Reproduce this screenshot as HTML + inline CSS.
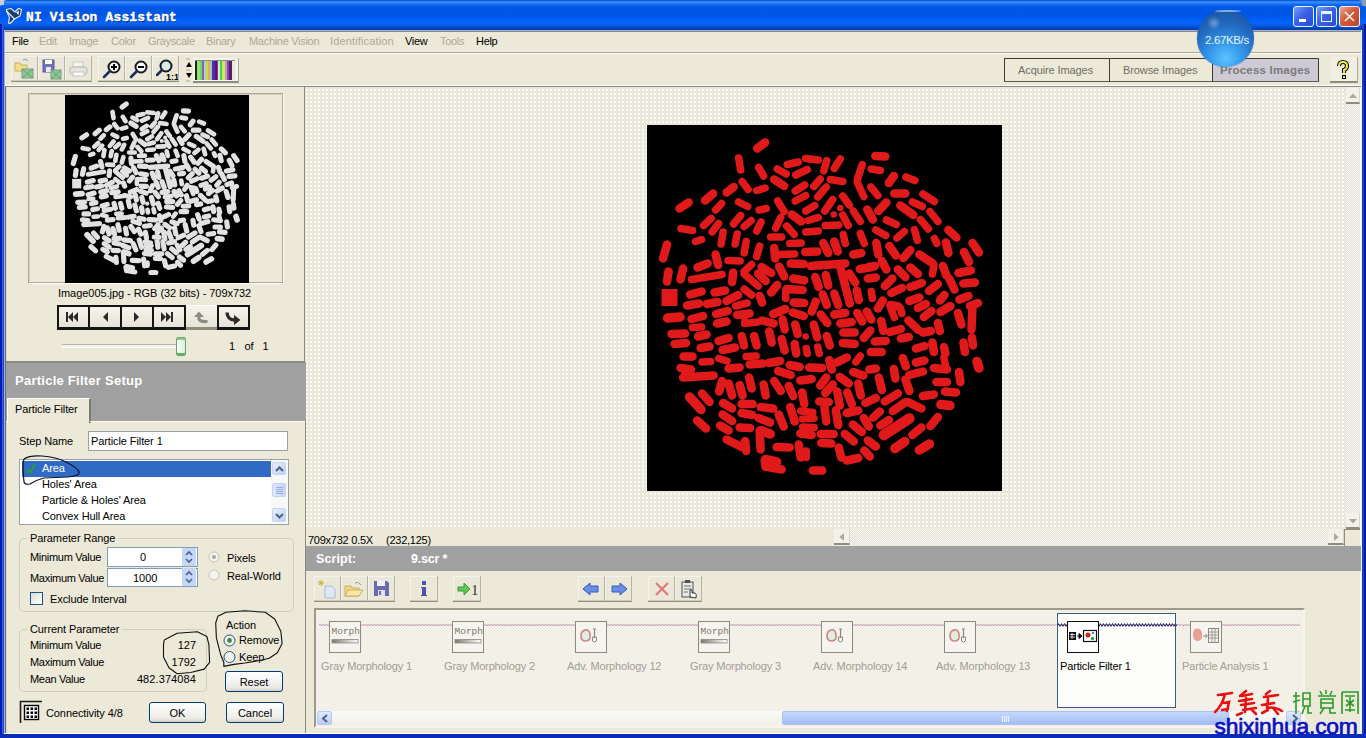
<!DOCTYPE html>
<html><head><meta charset="utf-8">
<style>
*{margin:0;padding:0;box-sizing:border-box}
html,body{width:1366px;height:738px;overflow:hidden;background:#ece9d8;font-family:"Liberation Sans",sans-serif;font-size:11px;color:#000;position:relative}
div,span,svg{position:absolute}
.t{white-space:nowrap;line-height:13px}
#title{left:0;top:0;width:1366px;height:30px;background:linear-gradient(#0048c8 0px,#3d95ff 2px,#1a70f0 4px,#0058e6 7px,#0055e4 15px,#005cf8 19px,#0062ff 21px,#0a62f0 24px,#0050d8 27px,#0040b0 29px,#0040b0 30px);border-radius:7px 7px 0 0}
.wb{background:#0b3fd6}
.m{top:35px;color:#aca899;letter-spacing:-0.3px}
.m.on{color:#000}
.tb{height:26px;border-right:1px solid #b8b5a6;border-bottom:1px solid #8f8c7c;box-shadow:inset 0 -1px 0 #cfccbf,inset 1px 1px 0 #f4f3ec;background:#ebe8da}
.tbi{height:26px;border-right:1px solid #aca899;border-bottom:2px solid #8f8c7c}
.hdr{background:#a0a0a0;color:#fff;font-weight:bold;font-size:13px}
.nb{top:305px;width:33px;height:25px;border:2px solid #141414;border-top-width:2px;background:linear-gradient(#f4f2e8,#e6e3d3)}
.btn{border:1px solid #003c74;border-radius:3px;background:linear-gradient(#fff,#ecebe6 80%,#d6d0c5);text-align:center;line-height:20px}
.gb{border:1px solid #d0d0bf;border-radius:5px}
.lbl{background:#ece9d8;padding:0 3px}
.sl{color:#9d9a8c}
#dots{left:306px;top:87px;width:1040px;height:441px;background:linear-gradient(90deg,transparent 2px,#eae8dc 2px),linear-gradient(transparent 2px,#eae8dc 2px),#fcfcf0;background-size:4px 4px;background-position:0px 2px}
.sb{background:conic-gradient(#fcfcf6 25%,#dedcd2 0 50%,#fcfcf6 0 75%,#dedcd2 0) 0 0/2px 2px}
</style></head><body>
<!-- TITLE -->
<div id="title"></div>
<svg style="left:0;top:0" width="26" height="28"><path d="M6.5 9.5 L11 8.5 L15 12 L18.5 8.5 L21.5 9.5 L20 16 L14.5 19 L10 23.5 L8.5 23 L9.5 17.5 L6.5 11 Z" fill="#1e3a6e" stroke="#e8f4ff" stroke-width="1.1"/><path d="M6.5 11 L14.5 19" stroke="#e8f4ff" stroke-width="1.1"/><path d="M16 12.5 L19 10.5 L18.5 15" fill="#e8f4ff"/></svg>
<div class="t" style="left:26px;top:11px;font-family:'Liberation Mono',monospace;font-weight:bold;font-size:13px;color:#fff;letter-spacing:0.15px;-webkit-text-stroke:0.4px #fff;text-shadow:1px 1px 0 #0a2a80">NI Vision Assistant</div>
<div style="left:0;top:24px;width:2px;height:714px;background:#001cb8"></div>
<div style="left:2px;top:24px;width:1px;height:714px;background:#3060f0"></div>
<div style="left:3px;top:24px;width:1px;height:714px;background:#2848c8"></div>
<div style="left:4px;top:30px;width:1px;height:704px;background:#a0b0d8"></div>
<div style="left:1362px;top:24px;width:1px;height:714px;background:#1a3ab0"></div>
<div style="left:1363px;top:24px;width:1px;height:714px;background:#2040c0"></div>
<div style="left:1364px;top:24px;width:2px;height:714px;background:#001c98"></div>
<div style="left:1361px;top:30px;width:1px;height:704px;background:#e8f8ff"></div>
<div style="left:0;top:734px;width:1366px;height:4px;background:#0a2cb8"></div>
<div style="left:4px;top:733px;width:1358px;height:1px;background:#fff"></div>
<!-- window buttons -->
<div style="left:1293px;top:6px;width:21px;height:21px;border:1px solid #e8f4ff;border-radius:3px;background:linear-gradient(135deg,#7a9cff,#3a62e8 45%,#2a4cd0)"><div style="left:5px;top:12px;width:7px;height:3px;background:#fff"></div></div>
<div style="left:1316px;top:6px;width:21px;height:21px;border:1px solid #e8f4ff;border-radius:3px;background:linear-gradient(135deg,#7a9cff,#3a62e8 45%,#2a4cd0)"><div style="left:4px;top:4px;width:11px;height:11px;border:1px solid #e8f8ff;border-top-width:3px"></div></div>
<div style="left:1339px;top:6px;width:21px;height:21px;border:1px solid #f4f0f0;border-radius:3px;background:linear-gradient(135deg,#f0a890,#d25a38 45%,#c04428)"><svg style="left:3px;top:3px" width="13" height="13"><path d="M2 2 L11 11 M11 2 L2 11" stroke="#fff4ee" stroke-width="1.7"/></svg></div>
<div style="left:1362px;top:0;width:4px;height:6px;background:#9098b0"></div>
<div style="left:0;top:0;width:4px;height:5px;background:#c8ccd8"></div>
<!-- MENU -->
<div style="left:5px;top:30px;width:1356px;height:1px;background:#a8b0d8"></div>
<div style="left:5px;top:31px;width:1356px;height:1px;background:#8a8a80"></div>
<div style="left:5px;top:52px;width:1356px;height:1px;background:#aca899"></div>
<div style="left:5px;top:53px;width:1356px;height:1px;background:#fff"></div>
<div class="t m on" style="left:12px">File</div>
<div class="t m" style="left:39px">Edit</div>
<div class="t m" style="left:69px">Image</div>
<div class="t m" style="left:111px">Color</div>
<div class="t m" style="left:148px">Grayscale</div>
<div class="t m" style="left:206px">Binary</div>
<div class="t m" style="left:249px">Machine Vision</div>
<div class="t m" style="left:330px;letter-spacing:0.15px">Identification</div>
<div class="t m on" style="left:405px">View</div>
<div class="t m" style="left:440px">Tools</div>
<div class="t m on" style="left:476px">Help</div>
<!-- TOOLBAR -->
<div style="left:5px;top:86px;width:1356px;height:1px;background:#8a8a80"></div>
<div style="left:5px;top:85px;width:1356px;height:1px;background:#fff"></div>
<div class="tb" style="left:11px;top:56px;width:27px"><svg style="left:3px;top:2px" width="22" height="22"><path d="M1 5 L6 5 L7 7 L13 7 L13 13 L1 13 Z" fill="#f3dc8a" stroke="#c9b060"/><path d="M9 2 Q12 0 14 3" fill="none" stroke="#7f9fb0" stroke-width="1"/><rect x="8" y="11" width="11" height="9" fill="#8fc79a" stroke="#7a9a80"/><path d="M8 11 L19 20 M19 11 L8 20" stroke="#5fa070" stroke-width="1"/></svg></div>
<div class="tb" style="left:38px;top:56px;width:27px"><svg style="left:3px;top:2px" width="22" height="22"><rect x="2" y="2" width="11" height="12" fill="#7470b8" stroke="#5a5a98"/><rect x="4" y="2" width="7" height="4" fill="#fff"/><rect x="5" y="9" width="5" height="5" fill="#e8e8f8"/><rect x="10" y="12" width="10" height="9" fill="#8fc79a" stroke="#7a9a80"/><path d="M10 12 L20 21 M20 12 L10 21" stroke="#5fa070"/></svg></div>
<div class="tb" style="left:65px;top:56px;width:27px"><svg style="left:3px;top:4px" width="22" height="20"><rect x="5" y="2" width="10" height="5" fill="#f4f4f0" stroke="#c8c8c0"/><rect x="2" y="7" width="17" height="7" rx="2" fill="#e4e4de" stroke="#b8b8b0"/><rect x="5" y="12" width="11" height="4" fill="#fafaf8" stroke="#c8c8c0"/></svg></div>
<div class="tb" style="left:98px;top:56px;width:27px"><svg style="left:4px;top:3px" width="20" height="20"><circle cx="12" cy="8" r="5.5" fill="#fff" stroke="#1a1a1a" stroke-width="2"/><path d="M9 8 H15 M12 5 V11" stroke="#000" stroke-width="2"/><path d="M8 12 L2 18" stroke="#1e2a5e" stroke-width="2.5" stroke-linecap="round"/></svg></div>
<div class="tb" style="left:125px;top:56px;width:27px"><svg style="left:4px;top:3px" width="20" height="20"><circle cx="12" cy="8" r="5.5" fill="#fff" stroke="#1a1a1a" stroke-width="2"/><path d="M9 8 H15" stroke="#000" stroke-width="2"/><path d="M8 12 L2 18" stroke="#1e2a5e" stroke-width="2.5" stroke-linecap="round"/></svg></div>
<div class="tb" style="left:152px;top:56px;width:27px"><svg style="left:4px;top:3px" width="22" height="22"><circle cx="10" cy="7" r="5.5" fill="#d8ecec" stroke="#1a1a1a" stroke-width="2"/><path d="M6 11 L1 16" stroke="#1e2a5e" stroke-width="2.5" stroke-linecap="round"/><text x="10" y="21" font-family="Liberation Sans" font-weight="bold" font-size="9" fill="#000">1:1</text></svg></div>
<svg style="left:185px;top:58px" width="10" height="24"><path d="M1 1 H5 M1 12 H5 M1 23 H5" stroke="#aca899"/><path d="M4 4 L1 9 H7 Z" fill="#000"/><path d="M1 15 H7 L4 20 Z" fill="#000"/></svg>
<div style="left:193px;top:58px;width:46px;height:25px;border-right:1px solid #aca899;border-bottom:2px solid #8f8c7c;background:#f4f3ea"></div>
<svg style="left:195px;top:60px" width="40" height="20"><g>
<rect x="0" y="0" width="40" height="20" fill="#888"/>
<rect x="0" y="1" width="2" height="19" fill="#222"/><rect x="2" y="1" width="3" height="19" fill="#8ce86a"/><rect x="5" y="1" width="2" height="19" fill="#6fd870"/><rect x="7" y="1" width="2" height="19" fill="#9a60a8"/><rect x="9" y="1" width="2" height="19" fill="#b0c8e0"/><rect x="11" y="1" width="2" height="19" fill="#c8e040"/><rect x="13" y="1" width="2" height="19" fill="#e0b060"/><rect x="15" y="1" width="2" height="19" fill="#a0c0e0"/><rect x="17" y="1" width="3" height="19" fill="#5030a0"/><rect x="20" y="1" width="2" height="19" fill="#401890"/><rect x="22" y="1" width="1" height="19" fill="#d02040"/><rect x="23" y="1" width="2" height="19" fill="#c0f0e0"/><rect x="25" y="1" width="2" height="19" fill="#50c860"/><rect x="27" y="1" width="3" height="19" fill="#c8f040"/><rect x="30" y="1" width="2" height="19" fill="#c890d8"/><rect x="32" y="1" width="2" height="19" fill="#9040b0"/><rect x="34" y="1" width="3" height="19" fill="#502060"/><rect x="37" y="1" width="3" height="19" fill="#e8e8e0"/>
</g></svg>
<!-- right tabs -->
<div style="left:1004px;top:58px;width:315px;height:24px;border:1px solid #3c3c34;border-bottom-color:#5a5a50;background:#ece9d8"></div>
<div style="left:1109px;top:58px;width:1px;height:24px;background:#3c3c34"></div>
<div style="left:1212px;top:58px;width:1px;height:24px;background:#3c3c34"></div>
<div style="left:1213px;top:59px;width:105px;height:22px;background:#cdcad6"></div>
<div class="t" style="left:1018px;top:64px;color:#6f6e66;letter-spacing:-0.1px">Acquire Images</div>
<div class="t" style="left:1123px;top:64px;color:#6f6e66;letter-spacing:-0.1px">Browse Images</div>
<div class="t" style="left:1220px;top:64px;color:#7a7a7a;font-weight:bold;font-size:11.5px;letter-spacing:0.2px">Process Images</div>
<div style="left:1330px;top:57px;width:28px;height:26px;border-right:1px solid #aca899;border-bottom:2px solid #8f8c7c;background:#f1efe4"><svg style="left:6px;top:3px" width="14" height="19"><path d="M3 6 Q3 2 7 2 Q11 2 11 6 Q11 9 8 10 L8 13" fill="none" stroke="#000" stroke-width="4"/><path d="M3 6 Q3 2 7 2 Q11 2 11 6 Q11 9 8 10 L8 13" fill="none" stroke="#f0f040" stroke-width="2"/><rect x="6" y="15" width="4" height="4" fill="#000"/><rect x="7" y="16" width="2" height="2" fill="#f0f040"/></svg></div>
<!-- LEFT PANEL TOP -->
<div style="left:5px;top:87px;width:1px;height:646px;background:#6c6c6c"></div><div style="left:6px;top:87px;width:1px;height:646px;background:#d8d8d0"></div>
<div style="left:304px;top:87px;width:1px;height:275px;background:#8a8a80"></div>
<div style="left:6px;top:361px;width:299px;height:1px;background:#8a8a80"></div>
<div style="left:28px;top:93px;width:256px;height:191px;border:1px solid #aca899;border-right-color:#fff;border-bottom-color:#fff;background:#ece9d8"></div>
<div style="left:29px;top:94px;width:254px;height:189px;border:1px solid #d4d0c8;border-right-color:#aca899;border-bottom-color:#aca899"></div>
<svg style="left:65px;top:95px" width="184" height="188" viewBox="0 0 709 732" preserveAspectRatio="none"><rect width="709" height="732" fill="#000"/><use href="#pt" stroke="#e2e2e2"/></svg>
<div class="t" style="left:58px;top:287px;letter-spacing:-0.05px">Image005.jpg - RGB (32 bits) - 709x732</div>
<!-- nav buttons -->
<div style="left:57px;top:305px;width:193px;height:25px;background:linear-gradient(#f6f5ee,#e4e1d2)"></div>
<div style="left:57px;top:305px;width:129px;height:25px;border:2px solid #141414;border-bottom-width:3px"></div>
<div style="left:88px;top:305px;width:2px;height:25px;background:#141414"></div>
<div style="left:120px;top:305px;width:2px;height:25px;background:#141414"></div>
<div style="left:152px;top:305px;width:2px;height:25px;background:#141414"></div>
<div style="left:186px;top:305px;width:31px;height:25px;border-top:1px solid #fff;border-bottom:3px solid #8f8c7c"></div>
<div style="left:217px;top:305px;width:33px;height:25px;border:2px solid #141414;border-bottom-width:3px"></div>
<svg style="left:57px;top:305px" width="193" height="25">
<g fill="#2a2a2a"><rect x="9" y="7" width="2" height="10"/><path d="M11 12 L16 7 V17 Z M16 12 L21 7 V17 Z"/></g>
<path fill="#2a2a2a" d="M46 12 L51 7 V17 Z"/>
<path fill="#2a2a2a" d="M77 7 L82 12 L77 17 Z"/>
<g fill="#2a2a2a"><path d="M104 7 L109 12 L104 17 Z M109 7 L114 12 L109 17 Z"/><rect x="114" y="7" width="2" height="10"/></g>
<path d="M137 12 L142 6.5 L147 12 Z" fill="#8d8c82"/><path d="M142 11 V13.5 Q142 17 150.5 16.5" fill="none" stroke="#8d8c82" stroke-width="3.2"/>
<path d="M170 7.5 Q170.5 15 177.5 15" fill="none" stroke="#2a2a2a" stroke-width="3.4"/><path d="M177 10 L183.5 15 L177 20 Z" fill="#2a2a2a"/>
</svg>
<!-- slider -->
<div style="left:61px;top:344px;width:118px;height:4px;border-top:1px solid #b8b4a0;border-bottom:1px solid #fff;background:#f4f3ee;border-radius:2px"></div>
<div style="left:176px;top:337px;width:10px;height:19px;border:1px solid #6aa870;border-radius:2px;background:linear-gradient(90deg,#f8fff8,#dcefdc);box-shadow:inset 0 -2px 0 #60b060,inset 0 2px 0 #8cc890"></div>
<div class="t" style="left:229px;top:340px">1</div><div class="t" style="left:244.5px;top:340px">of</div><div class="t" style="left:262.5px;top:340px">1</div>
<!-- PARTICLE FILTER SETUP -->
<div style="left:6px;top:362px;width:300px;height:59px;background:#a0a0a0"></div><div style="left:6px;top:362px;width:300px;height:1px;background:#8c8c8c"></div>
<div class="t" style="left:15px;top:374px;color:#fff;font-weight:bold;font-size:13px;letter-spacing:0.25px">Particle Filter Setup</div>
<div style="left:7px;top:398px;width:84px;height:25px;background:#ece9d8;border-top:1px solid #fff;border-left:1px solid #fff;border-right:2px solid #7c7a70"></div>
<div class="t" style="left:15px;top:403px;letter-spacing:-0.1px">Particle Filter</div>
<div style="left:90px;top:421px;width:215px;height:1px;background:#fcfcf4"></div>
<div style="left:305px;top:421px;width:1px;height:312px;background:#8a8a80"></div>
<div class="t" style="left:19px;top:435px;letter-spacing:-0.1px">Step Name</div>
<div style="left:88px;top:431px;width:200px;height:20px;border:1px solid #9aa2a8;background:#fff"></div>
<div class="t" style="left:91px;top:435px;letter-spacing:-0.1px">Particle Filter 1</div>
<!-- listbox -->
<div style="left:19px;top:459px;width:270px;height:66px;border:1px solid #9aa2a8;background:#fff"></div>
<div style="left:22px;top:461px;width:249px;height:16px;background:#316ac5"></div>
<svg style="left:25px;top:462px" width="12" height="13"><path d="M2 7 L5 11 L10 2" fill="none" stroke="#2e9a3a" stroke-width="2.2"/></svg>
<div class="t" style="left:42px;top:462px;color:#fff;letter-spacing:-0.1px">Area</div>
<div class="t" style="left:42px;top:478px;letter-spacing:-0.1px">Holes' Area</div>
<div class="t" style="left:42px;top:494px;letter-spacing:-0.1px">Particle &amp; Holes' Area</div>
<div class="t" style="left:42px;top:510px;letter-spacing:-0.1px">Convex Hull Area</div>
<div style="left:271px;top:460px;width:17px;height:64px;background:#f8f8f6"></div>
<div style="left:272px;top:462px;width:14px;height:13px;border:1px solid #c4d4f4;border-radius:2px;background:linear-gradient(135deg,#e8eefc,#c0d0f4)"><svg style="left:2px;top:3px" width="9" height="6"><path d="M1 5 L4.5 1.5 L8 5" fill="none" stroke="#4d6185" stroke-width="2"/></svg></div>
<div style="left:272px;top:483px;width:14px;height:14px;border:1px solid #c4d4f4;border-radius:2px;background:linear-gradient(90deg,#dce6fc,#c8d6f8)"><svg style="left:2px;top:3px" width="9" height="8"><path d="M1 0.5 H8 M1 2.5 H8 M1 4.5 H8 M1 6.5 H8" stroke="#98acd8" stroke-width="1"/></svg></div>
<div style="left:272px;top:508px;width:14px;height:14px;border:1px solid #c4d4f4;border-radius:2px;background:linear-gradient(135deg,#e8eefc,#c0d0f4)"><svg style="left:2px;top:4px" width="9" height="6"><path d="M1 1 L4.5 4.5 L8 1" fill="none" stroke="#4d6185" stroke-width="2"/></svg></div>
<!-- hand loop around Area -->
<svg style="left:18px;top:452px" width="70" height="36"><path d="M6 7 Q12 3 24 4 Q38 5 48 10 Q60 16 61 20 Q62 24 50 25 L26 26 Q18 28 12 32 Q7 33 6 30 Q5 22 5 14 Q5 9 6 7" fill="none" stroke="#0c1424" stroke-width="1.2"/></svg>
<!-- Parameter Range -->
<div class="gb" style="left:19px;top:538px;width:275px;height:74px"></div>
<div class="t lbl" style="left:27px;top:532px;letter-spacing:-0.1px">Parameter Range</div>
<div class="t" style="left:30px;top:551px;letter-spacing:-0.3px">Minimum Value</div>
<div class="t" style="left:30px;top:572px;letter-spacing:-0.3px">Maximum Value</div>
<div style="left:107px;top:547px;width:91px;height:20px;border:1px solid #7f9db9;background:#fff"></div>
<div style="left:107px;top:568px;width:91px;height:19px;border:1px solid #7f9db9;background:#fff"></div>
<div class="t" style="left:140px;top:551px">0</div>
<div class="t" style="left:133px;top:572px">1000</div>
<svg style="left:182px;top:548px" width="14" height="38"><rect x="0" y="0" width="14" height="18" fill="#c6d6f8"/><rect x="0" y="20" width="14" height="18" fill="#c6d6f8"/><path d="M4 7 L7 4 L10 7 M4 11 L7 14 L10 11 M4 27 L7 24 L10 27 M4 31 L7 34 L10 31" fill="none" stroke="#4d6185" stroke-width="1.6"/></svg>
<svg style="left:208px;top:551px" width="14" height="32"><circle cx="6" cy="6" r="5" fill="#f4f3ee" stroke="#c6c3b4"/><circle cx="6" cy="6" r="2" fill="#a8a698"/><circle cx="6" cy="24" r="5" fill="#f4f3ee" stroke="#c6c3b4"/></svg>
<div class="t" style="left:227px;top:552px;letter-spacing:-0.1px">Pixels</div>
<div class="t" style="left:227px;top:570px;letter-spacing:-0.1px">Real-World</div>
<div style="left:30px;top:592px;width:13px;height:13px;border:1px solid #1c5180;background:linear-gradient(135deg,#dcdcd6,#fff)"></div>
<div class="t" style="left:50px;top:593px;letter-spacing:-0.1px">Exclude Interval</div>
<!-- Current Parameter -->
<div class="gb" style="left:19px;top:629px;width:188px;height:63px"></div>
<div class="t lbl" style="left:27px;top:623px;letter-spacing:-0.1px">Current Parameter</div>
<div class="t" style="left:30px;top:639px;letter-spacing:-0.3px">Minimum Value</div>
<div class="t" style="left:30px;top:656px;letter-spacing:-0.3px">Maximum Value</div>
<div class="t" style="left:30px;top:673px;letter-spacing:-0.3px">Mean Value</div>
<div class="t" style="left:100px;top:639px;width:96px;text-align:right">127</div>
<div class="t" style="left:100px;top:656px;width:96px;text-align:right">1792</div>
<div class="t" style="left:100px;top:673px;width:96px;text-align:right;letter-spacing:0.1px">482.374084</div>
<svg style="left:160px;top:628px" width="54" height="50"><path d="M4.2 12 L17.1 5.2 L37.4 3.8 L46.9 8.6 L48.9 16.7 L49.6 34.3 L44.2 41.1 L30.7 44.5 L17.1 45.8 L9 39.8 L3.5 28.9 L3.5 16.7 L4.2 12" fill="none" stroke="#101010" stroke-width="1.1" stroke-linejoin="round"/></svg>
<!-- Action -->
<div class="t" style="left:226px;top:619px;letter-spacing:-0.1px">Action</div>
<svg style="left:223px;top:634px" width="14" height="32"><circle cx="6.5" cy="6.5" r="5.5" fill="#f4f3ee" stroke="#1c5180"/><circle cx="6.5" cy="6.5" r="2.4" fill="#3c8c3c"/><circle cx="6.5" cy="23" r="5.5" fill="#f4f3ee" stroke="#1c5180"/></svg>
<div class="t" style="left:239px;top:634px;letter-spacing:-0.1px">Remove</div>
<div class="t" style="left:239px;top:651px;letter-spacing:-0.1px">Keep</div>
<svg style="left:212px;top:609px" width="76" height="62"><path d="M5.8 7.3 L13.9 3.2 L32.9 1.8 L53.2 3.2 L62.7 10 L68.8 22.2 L70.1 34.4 L65.4 43.8 L57.2 49.3 L49.1 51.3 L32.9 54 L22 55.4 L11.8 57.4 L11.8 53.3 L8.5 45.2 L4.4 28.9 L3.7 14 L5.8 7.3" fill="none" stroke="#101010" stroke-width="1.1" stroke-linejoin="round"/></svg>
<div class="t btn" style="left:225px;top:671px;width:58px;height:21px">Reset</div>
<!-- bottom row -->
<svg style="left:19px;top:700px" width="26" height="24"><path d="M1.5 23 V1.5 H23" fill="none" stroke="#1a1a1a" stroke-width="1.6"/><rect x="5.5" y="5.5" width="14" height="14" fill="#fff" stroke="#000" stroke-width="1.4"/><g fill="#000"><rect x="7.5" y="7.5" width="2.5" height="2.5"/><rect x="11.5" y="7.5" width="2.5" height="2.5"/><rect x="15.5" y="7.5" width="2.5" height="2.5"/><rect x="7.5" y="11.5" width="2.5" height="2.5"/><rect x="11.5" y="11.5" width="2.5" height="2.5"/><rect x="15.5" y="11.5" width="2.5" height="2.5"/><rect x="7.5" y="15.5" width="2.5" height="2.5"/><rect x="11.5" y="15.5" width="2.5" height="2.5"/><rect x="15.5" y="15.5" width="2.5" height="2.5"/></g></svg>
<div class="t" style="left:46px;top:707px;letter-spacing:-0.1px">Connectivity 4/8</div>
<div class="t btn" style="left:149px;top:702px;width:57px;height:21px">OK</div>
<div class="t btn" style="left:226px;top:702px;width:58px;height:21px">Cancel</div>
<!-- MAIN IMAGE AREA -->
<div id="dots"></div>
<svg style="left:647px;top:125px" width="355" height="366" viewBox="0 0 709 732" preserveAspectRatio="none"><rect width="709" height="732" fill="#000"/><use href="#pp" stroke="#e01a1a"/></svg>
<!-- v scrollbar -->
<div class="sb" style="left:1346px;top:87px;width:15px;height:442px"></div>
<div style="left:1346px;top:88px;width:14px;height:16px;background:#f2f1ea;border-right:1px solid #d8d6c8;border-bottom:2px solid #8f8c7c"><svg style="left:2px;top:4px" width="10" height="7"><path d="M1 6 L5 1.5 L9 6 Z" fill="#aaa898"/></svg></div>
<div style="left:1346px;top:513px;width:14px;height:16px;background:#f2f1ea;border-right:1px solid #d8d6c8;border-bottom:2px solid #8f8c7c"><svg style="left:2px;top:5px" width="10" height="7"><path d="M1 1 L9 1 L5 5.5 Z" fill="#aaa898"/></svg></div>
<!-- h scrollbar -->
<div class="sb" style="left:834px;top:529px;width:510px;height:17px"></div>
<div style="left:834px;top:529px;width:16px;height:16px;background:#f2f1ea;border-right:1px solid #d8d6c8;border-bottom:2px solid #8f8c7c"><svg style="left:4px;top:3px" width="7" height="10"><path d="M6 1 L6 9 L1.5 5 Z" fill="#aaa898"/></svg></div>
<div style="left:1328px;top:529px;width:16px;height:16px;background:#f2f1ea;border-right:1px solid #d8d6c8;border-bottom:2px solid #8f8c7c"><svg style="left:5px;top:3px" width="7" height="10"><path d="M1 1 L1 9 L5.5 5 Z" fill="#aaa898"/></svg></div>
<div style="left:1344px;top:529px;width:17px;height:17px;background:#ece9d8;border-left:1px solid #8f8c7c;border-top:1px solid #8f8c7c"></div>
<div style="left:1360px;top:87px;width:1px;height:647px;background:#f8f8f8"></div>
<div class="t" style="left:308px;top:534px;letter-spacing:-0.25px">709x732 0.5X</div><div class="t" style="left:386px;top:534px;letter-spacing:-0.25px">(232,125)</div>
<!-- SCRIPT -->
<div style="left:306px;top:546px;width:1055px;height:25px;background:#a0a0a0"></div>
<div class="t" style="left:316px;top:553px;color:#fff;font-weight:bold;font-size:12.5px;letter-spacing:0.1px">Script:</div>
<div class="t" style="left:411px;top:553px;color:#fff;font-weight:bold;font-size:12.5px;letter-spacing:-0.2px">9.scr *</div>
<div class="tb" style="left:314px;top:576px;width:27px"><svg style="left:3px;top:2px" width="22" height="22"><path d="M4 2 V8 M1 5 H7 M2 3 L6 7 M6 3 L2 7" stroke="#c8b820" stroke-width="1"/><path d="M8 8 H15 L18 11 V20 H8 Z" fill="#dce8f4" stroke="#a8bcd0"/></svg></div>
<div class="tb" style="left:341px;top:576px;width:27px"><svg style="left:2px;top:3px" width="22" height="22"><path d="M2 7 H8 L9 9 H16 V17 H2 Z" fill="#f0d888" stroke="#c8b060"/><path d="M5 11 H20 L16 17 H2 Z" fill="#f8e8a8" stroke="#c8b060"/><path d="M12 4 Q16 2 18 6" fill="none" stroke="#8aa0b0"/></svg></div>
<div class="tb" style="left:368px;top:576px;width:27px"><svg style="left:4px;top:3px" width="20" height="20"><path d="M2 2 H15 L17 4 V17 H2 Z" fill="#6a6ab0"/><rect x="5" y="2" width="8" height="5" fill="#f0f0f8"/><rect x="6" y="11" width="7" height="6" fill="#e0e0f0"/><rect x="7" y="12" width="2" height="4" fill="#6a6ab0"/></svg></div>
<div class="tb" style="left:410px;top:576px;width:28px"><svg style="left:8px;top:3px" width="12" height="20"><rect x="4" y="2" width="4" height="4" fill="#5050b0"/><path d="M3 8 H8 V16 H9 V17 H3 V16 H4 V9 H3 Z" fill="#5050b0"/></svg></div>
<div class="tb" style="left:453px;top:576px;width:28px"><svg style="left:3px;top:3px" width="24" height="20"><path d="M2 8 H8 V4 L14 10 L8 16 V12 H2 Z" fill="#60c850" stroke="#3a9a3a"/><text x="15" y="16" font-family="Liberation Serif" font-size="15" fill="#333">1</text></svg></div>
<div class="tb" style="left:578px;top:576px;width:27px"><svg style="left:4px;top:4px" width="20" height="18"><path d="M1 9 L8 3 V6 H16 V12 H8 V15 Z" fill="#6a8ee8" stroke="#3858b8"/></svg></div>
<div class="tb" style="left:605px;top:576px;width:27px"><svg style="left:4px;top:4px" width="20" height="18"><path d="M18 9 L11 3 V6 H3 V12 H11 V15 Z" fill="#6a8ee8" stroke="#3858b8"/></svg></div>
<div class="tb" style="left:648px;top:576px;width:27px"><svg style="left:6px;top:5px" width="16" height="16"><path d="M2 2 L14 14 M14 2 L2 14" stroke="#e07a7a" stroke-width="2.2"/></svg></div>
<div class="tb" style="left:675px;top:576px;width:27px"><svg style="left:4px;top:3px" width="20" height="20"><rect x="3" y="3" width="11" height="15" fill="#e8e8e4" stroke="#505050"/><rect x="6" y="1" width="5" height="3" fill="#505050"/><path d="M5 7 H12 M5 10 H12 M5 13 H9" stroke="#707070"/><path d="M11 18 L11 11 Q12 10 13 11 V14 L16 14 Q18 15 17 19 Z" fill="#fff" stroke="#303030"/></svg></div>
<!-- script view -->
<div style="left:314px;top:608px;width:991px;height:120px;border:2px solid #f6f4ec;border-top-color:#9d9a8a;border-left-color:#9d9a8a;background:#f3f0e8"></div>
<svg style="left:318px;top:620px" width="982" height="10"><path id="wv" d="" fill="none" stroke="#d8a8c8" stroke-width="1"/></svg>
<svg style="left:0;top:0" width="0" height="0"><defs><linearGradient id="mg"><stop offset="0" stop-color="#7d796e"/><stop offset="1" stop-color="#fff"/></linearGradient><g id="pp" fill="none" stroke-linecap="round"><path stroke-width="13" d="M386 166L386 166M373 179L373 179M195 384L195 393M317 423L317 423"/><path stroke-width="14" d="M310 588L334 587"/><path stroke-width="15" d="M183 66L187 90M223 85L233 102M190 113L202 129M219 131L236 126M137 170L149 157M183 154L201 163M224 170L238 167M113 201L128 187M173 198L187 181M194 203L208 191M219 212L228 194M68 207L91 211M130 214L143 197M148 238L152 214M176 238L180 218M97 233L109 229M280 79L302 74M317 67L342 70M353 92L359 71M374 87L386 68M260 88L278 98M297 100L320 89M333 123L346 108M366 109L391 113M430 79L420 109M420 115L433 143M296 132L315 120M296 152L317 141M341 144L358 124M261 152L274 173M317 172L335 161M355 172L371 149M391 142L404 160M412 172L426 193M391 180L402 201M257 206L267 185M322 191L342 185M279 202L294 219M317 214L342 212M356 201L383 200M426 217L434 237M247 224L269 224M285 237L308 236M392 219L396 237M448 88L466 91M517 104L535 111M447 124L461 141M551 138L574 153M530 154L550 163M565 173L581 193M478 190L498 199M546 189L562 208M457 210L477 221M499 226L514 213M534 209L540 231M574 227L579 237M194 256L198 233M219 263L225 242M162 271L186 272M89 309L150 299M194 293L209 279M194 298L222 322M194 328L209 340M177 362L200 356M195 397L221 394M91 405L109 404M259 259L295 258M277 332L277 347M448 333L450 347M318 447L320 457M341 444L344 457M573 281L570 298M506 366L509 377M487 367L494 385M110 474L127 473M143 467L160 472M198 463L218 462M76 492L76 501M417 474L426 462M307 572L331 575M311 604L334 605M318 652L318 665M309 655L318 655M593 466L596 480"/><path stroke-width="17" d="M220 47L236 35M159 135L173 124M116 151L132 137M65 167L83 155M254 109L274 122M440 169L451 189M289 179L308 193M456 62L476 63M483 116L493 102M494 137L516 137M462 172L478 155M506 161L532 180M602 210L618 225M32 267L40 239M101 285L121 277M137 259L142 280M40 313L43 293M67 309L72 287M170 314L172 295M86 339L109 333M135 335L156 331M159 352L182 340M225 342L230 355M80 361L104 357M120 358L141 354M89 388L112 382M138 378L161 372M180 380L205 377M140 397L159 393M49 418L76 417M102 423L119 419M143 432L163 426M189 422L194 441M214 422L219 441M55 438L78 436M107 446L125 443M151 450L176 445M254 246L256 267M316 254L340 253M352 236L362 256M374 233L381 253M412 259L428 256M287 277L313 278M229 284L248 296M264 283L274 303M327 282L396 277M387 288L405 357M425 288L451 284M222 297L237 312M292 307L314 311M336 304L343 324M357 300L362 321M404 297L416 315M441 307L457 305M248 335L260 320M279 328L311 330M351 339L359 360M374 337L382 360M419 331L423 350M293 355L314 356M329 373L337 353M252 378L276 368M291 375L313 382M347 379L360 396M374 379L396 376M420 376L430 393M439 373L448 389M230 391L253 397M271 389L275 409M296 399L301 418M333 399L340 425M386 397L409 394M392 415L415 415M433 426L446 411M244 413L249 435M269 428L275 451M359 422L365 441M391 436L415 438M295 438L298 457M458 236L462 259M484 242L497 261M512 266L526 250M597 235L602 256M650 236L663 255M633 254L643 274M443 284L455 282M469 272L478 289M544 259L571 277M591 282L598 301M501 289L516 304M526 285L541 298M622 296L647 291M475 322L490 307M604 308L614 329M632 317L655 315M526 324L549 316M563 332L581 318M488 336L509 326M524 352L544 345M585 351L594 340M624 349L642 342M461 367L471 351M541 366L557 358M486 360L502 363M586 374L606 362M645 362L661 356M650 366L648 409M468 392L472 412M522 391L542 410M551 415L567 412M553 384L568 372M581 396L585 412M621 376L628 399M485 414L507 408M455 433L477 432M507 427L523 424M570 435L573 454M593 444L596 457M632 435L635 454M649 425L651 441M537 447L554 442M447 454L469 454M73 463L91 463M163 487L185 485M205 479L231 477M67 486L88 489M72 505L133 501M144 533L150 512M163 517L170 541M185 520L191 541M204 505L209 527M233 519L237 541M110 537L125 554M152 556L170 567M189 558L211 558M151 579L170 592M189 576L210 580M100 591L118 607M146 601L163 611M185 605L206 606M159 629L189 644M196 632L198 652M225 613L227 649M235 671L237 684M243 476L266 472M285 480L305 484M324 485L350 486M364 470L369 489M379 475L399 465M444 489L457 487M262 492L287 500M306 511L329 508M346 521L358 505M385 504L403 517M412 494L432 501M254 512L267 532M283 522L292 542M310 535L314 558M356 536L371 519M380 533L385 561M400 535L409 558M422 517L427 541M344 553L363 554M354 561L358 593M377 571L382 600M436 556L457 546M227 564L252 567M286 564L295 593M263 579L273 603M399 576L422 571M223 586L246 595M411 599L429 614M433 586L443 603M306 617L329 620M347 618L373 618M348 636L368 637M395 618L413 633M441 631L457 643M259 644L285 645M303 639L307 665M383 645L388 665M399 671L422 666M434 651L445 663M246 685L269 689M331 691L350 691M511 466L517 483M537 475L554 471M573 486L599 489M493 488L496 507M463 505L469 530M524 500L551 493M516 509L524 532M578 514L599 514M623 494L626 514M595 533L617 535M475 553L501 537M551 542L573 539M491 572L515 555M521 554L548 567M452 585L465 573M466 601L483 590M566 602L581 584M530 620L548 605"/><path stroke-width="19" d="M41 386L66 384M85 544L108 569M227 611L246 618M237 669L259 674M659 473L663 486M587 559L605 561M495 647L515 633M544 650L564 638"/><path stroke-width="21" d="M473 620L524 587"/><path stroke-width="32" stroke-linecap="square" d="M45 344L45 346"/></g><g id="pt" fill="none" stroke-linecap="round"><path stroke-width="16" d="M386 166L386 166M373 179L373 179M195 384L195 393M317 423L317 423"/><path stroke-width="17" d="M310 588L334 587"/><path stroke-width="18" d="M183 66L187 90M223 85L233 102M190 113L202 129M219 131L236 126M137 170L149 157M183 154L201 163M224 170L238 167M113 201L128 187M173 198L187 181M194 203L208 191M219 212L228 194M68 207L91 211M130 214L143 197M148 238L152 214M176 238L180 218M97 233L109 229M280 79L302 74M317 67L342 70M353 92L359 71M374 87L386 68M260 88L278 98M297 100L320 89M333 123L346 108M366 109L391 113M430 79L420 109M420 115L433 143M296 132L315 120M296 152L317 141M341 144L358 124M261 152L274 173M317 172L335 161M355 172L371 149M391 142L404 160M412 172L426 193M391 180L402 201M257 206L267 185M322 191L342 185M279 202L294 219M317 214L342 212M356 201L383 200M426 217L434 237M247 224L269 224M285 237L308 236M392 219L396 237M448 88L466 91M517 104L535 111M447 124L461 141M551 138L574 153M530 154L550 163M565 173L581 193M478 190L498 199M546 189L562 208M457 210L477 221M499 226L514 213M534 209L540 231M574 227L579 237M194 256L198 233M219 263L225 242M162 271L186 272M89 309L150 299M194 293L209 279M194 298L222 322M194 328L209 340M177 362L200 356M195 397L221 394M91 405L109 404M259 259L295 258M277 332L277 347M448 333L450 347M318 447L320 457M341 444L344 457M573 281L570 298M506 366L509 377M487 367L494 385M110 474L127 473M143 467L160 472M198 463L218 462M76 492L76 501M417 474L426 462M307 572L331 575M311 604L334 605M318 652L318 665M309 655L318 655M593 466L596 480"/><path stroke-width="20" d="M220 47L236 35M159 135L173 124M116 151L132 137M65 167L83 155M254 109L274 122M440 169L451 189M289 179L308 193M456 62L476 63M483 116L493 102M494 137L516 137M462 172L478 155M506 161L532 180M602 210L618 225M32 267L40 239M101 285L121 277M137 259L142 280M40 313L43 293M67 309L72 287M170 314L172 295M86 339L109 333M135 335L156 331M159 352L182 340M225 342L230 355M80 361L104 357M120 358L141 354M89 388L112 382M138 378L161 372M180 380L205 377M140 397L159 393M49 418L76 417M102 423L119 419M143 432L163 426M189 422L194 441M214 422L219 441M55 438L78 436M107 446L125 443M151 450L176 445M254 246L256 267M316 254L340 253M352 236L362 256M374 233L381 253M412 259L428 256M287 277L313 278M229 284L248 296M264 283L274 303M327 282L396 277M387 288L405 357M425 288L451 284M222 297L237 312M292 307L314 311M336 304L343 324M357 300L362 321M404 297L416 315M441 307L457 305M248 335L260 320M279 328L311 330M351 339L359 360M374 337L382 360M419 331L423 350M293 355L314 356M329 373L337 353M252 378L276 368M291 375L313 382M347 379L360 396M374 379L396 376M420 376L430 393M439 373L448 389M230 391L253 397M271 389L275 409M296 399L301 418M333 399L340 425M386 397L409 394M392 415L415 415M433 426L446 411M244 413L249 435M269 428L275 451M359 422L365 441M391 436L415 438M295 438L298 457M458 236L462 259M484 242L497 261M512 266L526 250M597 235L602 256M650 236L663 255M633 254L643 274M443 284L455 282M469 272L478 289M544 259L571 277M591 282L598 301M501 289L516 304M526 285L541 298M622 296L647 291M475 322L490 307M604 308L614 329M632 317L655 315M526 324L549 316M563 332L581 318M488 336L509 326M524 352L544 345M585 351L594 340M624 349L642 342M461 367L471 351M541 366L557 358M486 360L502 363M586 374L606 362M645 362L661 356M650 366L648 409M468 392L472 412M522 391L542 410M551 415L567 412M553 384L568 372M581 396L585 412M621 376L628 399M485 414L507 408M455 433L477 432M507 427L523 424M570 435L573 454M593 444L596 457M632 435L635 454M649 425L651 441M537 447L554 442M447 454L469 454M73 463L91 463M163 487L185 485M205 479L231 477M67 486L88 489M72 505L133 501M144 533L150 512M163 517L170 541M185 520L191 541M204 505L209 527M233 519L237 541M110 537L125 554M152 556L170 567M189 558L211 558M151 579L170 592M189 576L210 580M100 591L118 607M146 601L163 611M185 605L206 606M159 629L189 644M196 632L198 652M225 613L227 649M235 671L237 684M243 476L266 472M285 480L305 484M324 485L350 486M364 470L369 489M379 475L399 465M444 489L457 487M262 492L287 500M306 511L329 508M346 521L358 505M385 504L403 517M412 494L432 501M254 512L267 532M283 522L292 542M310 535L314 558M356 536L371 519M380 533L385 561M400 535L409 558M422 517L427 541M344 553L363 554M354 561L358 593M377 571L382 600M436 556L457 546M227 564L252 567M286 564L295 593M263 579L273 603M399 576L422 571M223 586L246 595M411 599L429 614M433 586L443 603M306 617L329 620M347 618L373 618M348 636L368 637M395 618L413 633M441 631L457 643M259 644L285 645M303 639L307 665M383 645L388 665M399 671L422 666M434 651L445 663M246 685L269 689M331 691L350 691M511 466L517 483M537 475L554 471M573 486L599 489M493 488L496 507M463 505L469 530M524 500L551 493M516 509L524 532M578 514L599 514M623 494L626 514M595 533L617 535M475 553L501 537M551 542L573 539M491 572L515 555M521 554L548 567M452 585L465 573M466 601L483 590M566 602L581 584M530 620L548 605"/><path stroke-width="22" d="M41 386L66 384M85 544L108 569M227 611L246 618M237 669L259 674M659 473L663 486M587 559L605 561M495 647L515 633M544 650L564 638"/><path stroke-width="24" d="M473 620L524 587"/><path stroke-width="35" stroke-linecap="square" d="M45 344L45 346"/></g></defs></svg>
<div style="left:1057px;top:613px;width:119px;height:95px;border:1px solid #3c5a84;background:#fdfdfa"></div>
<svg style="left:316px;top:620px" width="990" height="10"><path d="M3 5 L4.5 4 L6.0 6 L7.5 4 L9.0 6 L10.5 4 L12.0 6 L13.5 4 L15.0 6 L16.5 4 L18.0 6 L19.5 4 L21.0 6 L22.5 4 L24.0 6 L25.5 4 L27.0 6 L28.5 4 L30.0 6 L31.5 4 L33.0 6 L34.5 4 L36.0 6 L37.5 4 L39.0 6 L40.5 4 L42.0 6 L43.5 4 L45.0 6 L46.5 4 L48.0 6 L49.5 4 L51.0 6 L52.5 4 L54.0 6 L55.5 4 L57.0 6 L58.5 4 L60.0 6 L61.5 4 L63.0 6 L64.5 4 L66.0 6 L67.5 4 L69.0 6 L70.5 4 L72.0 6 L73.5 4 L75.0 6 L76.5 4 L78.0 6 L79.5 4 L81.0 6 L82.5 4 L84.0 6 L85.5 4 L87.0 6 L88.5 4 L90.0 6 L91.5 4 L93.0 6 L94.5 4 L96.0 6 L97.5 4 L99.0 6 L100.5 4 L102.0 6 L103.5 4 L105.0 6 L106.5 4 L108.0 6 L109.5 4 L111.0 6 L112.5 4 L114.0 6 L115.5 4 L117.0 6 L118.5 4 L120.0 6 L121.5 4 L123.0 6 L124.5 4 L126.0 6 L127.5 4 L129.0 6 L130.5 4 L132.0 6 L133.5 4 L135.0 6 L136.5 4 L138.0 6 L139.5 4 L141.0 6 L142.5 4 L144.0 6 L145.5 4 L147.0 6 L148.5 4 L150.0 6 L151.5 4 L153.0 6 L154.5 4 L156.0 6 L157.5 4 L159.0 6 L160.5 4 L162.0 6 L163.5 4 L165.0 6 L166.5 4 L168.0 6 L169.5 4 L171.0 6 L172.5 4 L174.0 6 L175.5 4 L177.0 6 L178.5 4 L180.0 6 L181.5 4 L183.0 6 L184.5 4 L186.0 6 L187.5 4 L189.0 6 L190.5 4 L192.0 6 L193.5 4 L195.0 6 L196.5 4 L198.0 6 L199.5 4 L201.0 6 L202.5 4 L204.0 6 L205.5 4 L207.0 6 L208.5 4 L210.0 6 L211.5 4 L213.0 6 L214.5 4 L216.0 6 L217.5 4 L219.0 6 L220.5 4 L222.0 6 L223.5 4 L225.0 6 L226.5 4 L228.0 6 L229.5 4 L231.0 6 L232.5 4 L234.0 6 L235.5 4 L237.0 6 L238.5 4 L240.0 6 L241.5 4 L243.0 6 L244.5 4 L246.0 6 L247.5 4 L249.0 6 L250.5 4 L252.0 6 L253.5 4 L255.0 6 L256.5 4 L258.0 6 L259.5 4 L261.0 6 L262.5 4 L264.0 6 L265.5 4 L267.0 6 L268.5 4 L270.0 6 L271.5 4 L273.0 6 L274.5 4 L276.0 6 L277.5 4 L279.0 6 L280.5 4 L282.0 6 L283.5 4 L285.0 6 L286.5 4 L288.0 6 L289.5 4 L291.0 6 L292.5 4 L294.0 6 L295.5 4 L297.0 6 L298.5 4 L300.0 6 L301.5 4 L303.0 6 L304.5 4 L306.0 6 L307.5 4 L309.0 6 L310.5 4 L312.0 6 L313.5 4 L315.0 6 L316.5 4 L318.0 6 L319.5 4 L321.0 6 L322.5 4 L324.0 6 L325.5 4 L327.0 6 L328.5 4 L330.0 6 L331.5 4 L333.0 6 L334.5 4 L336.0 6 L337.5 4 L339.0 6 L340.5 4 L342.0 6 L343.5 4 L345.0 6 L346.5 4 L348.0 6 L349.5 4 L351.0 6 L352.5 4 L354.0 6 L355.5 4 L357.0 6 L358.5 4 L360.0 6 L361.5 4 L363.0 6 L364.5 4 L366.0 6 L367.5 4 L369.0 6 L370.5 4 L372.0 6 L373.5 4 L375.0 6 L376.5 4 L378.0 6 L379.5 4 L381.0 6 L382.5 4 L384.0 6 L385.5 4 L387.0 6 L388.5 4 L390.0 6 L391.5 4 L393.0 6 L394.5 4 L396.0 6 L397.5 4 L399.0 6 L400.5 4 L402.0 6 L403.5 4 L405.0 6 L406.5 4 L408.0 6 L409.5 4 L411.0 6 L412.5 4 L414.0 6 L415.5 4 L417.0 6 L418.5 4 L420.0 6 L421.5 4 L423.0 6 L424.5 4 L426.0 6 L427.5 4 L429.0 6 L430.5 4 L432.0 6 L433.5 4 L435.0 6 L436.5 4 L438.0 6 L439.5 4 L441.0 6 L442.5 4 L444.0 6 L445.5 4 L447.0 6 L448.5 4 L450.0 6 L451.5 4 L453.0 6 L454.5 4 L456.0 6 L457.5 4 L459.0 6 L460.5 4 L462.0 6 L463.5 4 L465.0 6 L466.5 4 L468.0 6 L469.5 4 L471.0 6 L472.5 4 L474.0 6 L475.5 4 L477.0 6 L478.5 4 L480.0 6 L481.5 4 L483.0 6 L484.5 4 L486.0 6 L487.5 4 L489.0 6 L490.5 4 L492.0 6 L493.5 4 L495.0 6 L496.5 4 L498.0 6 L499.5 4 L501.0 6 L502.5 4 L504.0 6 L505.5 4 L507.0 6 L508.5 4 L510.0 6 L511.5 4 L513.0 6 L514.5 4 L516.0 6 L517.5 4 L519.0 6 L520.5 4 L522.0 6 L523.5 4 L525.0 6 L526.5 4 L528.0 6 L529.5 4 L531.0 6 L532.5 4 L534.0 6 L535.5 4 L537.0 6 L538.5 4 L540.0 6 L541.5 4 L543.0 6 L544.5 4 L546.0 6 L547.5 4 L549.0 6 L550.5 4 L552.0 6 L553.5 4 L555.0 6 L556.5 4 L558.0 6 L559.5 4 L561.0 6 L562.5 4 L564.0 6 L565.5 4 L567.0 6 L568.5 4 L570.0 6 L571.5 4 L573.0 6 L574.5 4 L576.0 6 L577.5 4 L579.0 6 L580.5 4 L582.0 6 L583.5 4 L585.0 6 L586.5 4 L588.0 6 L589.5 4 L591.0 6 L592.5 4 L594.0 6 L595.5 4 L597.0 6 L598.5 4 L600.0 6 L601.5 4 L603.0 6 L604.5 4 L606.0 6 L607.5 4 L609.0 6 L610.5 4 L612.0 6 L613.5 4 L615.0 6 L616.5 4 L618.0 6 L619.5 4 L621.0 6 L622.5 4 L624.0 6 L625.5 4 L627.0 6 L628.5 4 L630.0 6 L631.5 4 L633.0 6 L634.5 4 L636.0 6 L637.5 4 L639.0 6 L640.5 4 L642.0 6 L643.5 4 L645.0 6 L646.5 4 L648.0 6 L649.5 4 L651.0 6 L652.5 4 L654.0 6 L655.5 4 L657.0 6 L658.5 4 L660.0 6 L661.5 4 L663.0 6 L664.5 4 L666.0 6 L667.5 4 L669.0 6 L670.5 4 L672.0 6 L673.5 4 L675.0 6 L676.5 4 L678.0 6 L679.5 4 L681.0 6 L682.5 4 L684.0 6 L685.5 4 L687.0 6 L688.5 4 L690.0 6 L691.5 4 L693.0 6 L694.5 4 L696.0 6 L697.5 4 L699.0 6 L700.5 4 L702.0 6 L703.5 4 L705.0 6 L706.5 4 L708.0 6 L709.5 4 L711.0 6 L712.5 4 L714.0 6 L715.5 4 L717.0 6 L718.5 4 L720.0 6 L721.5 4 L723.0 6 L724.5 4 L726.0 6 L727.5 4 L729.0 6 L730.5 4 L732.0 6 L733.5 4 L735.0 6 L736.5 4 L738.0 6 L739.5 4" fill="none" stroke="#c8a0bc" stroke-width="1"/><path d="M741 5 L742.5 4 L744.0 6 L745.5 4 L747.0 6 L748.5 4 L750.0 6 L751.5 4 L753.0 6 L754.5 4 L756.0 6 L757.5 4 L759.0 6 L760.5 4 L762.0 6 L763.5 4 L765.0 6 L766.5 4 L768.0 6 L769.5 4 L771.0 6 L772.5 4 L774.0 6 L775.5 4 L777.0 6 L778.5 4 L780.0 6 L781.5 4 L783.0 6 L784.5 4 L786.0 6 L787.5 4 L789.0 6 L790.5 4 L792.0 6 L793.5 4 L795.0 6 L796.5 4 L798.0 6 L799.5 4 L801.0 6 L802.5 4 L804.0 6 L805.5 4 L807.0 6 L808.5 4 L810.0 6 L811.5 4 L813.0 6 L814.5 4 L816.0 6 L817.5 4 L819.0 6 L820.5 4 L822.0 6 L823.5 4 L825.0 6 L826.5 4 L828.0 6 L829.5 4 L831.0 6 L832.5 4 L834.0 6 L835.5 4 L837.0 6 L838.5 4 L840.0 6 L841.5 4 L843.0 6 L844.5 4 L846.0 6 L847.5 4 L849.0 6 L850.5 4 L852.0 6 L853.5 4 L855.0 6 L856.5 4 L858.0 6 L859.5 4 L861.0 6" fill="none" stroke="#3a2a6a" stroke-width="1.2"/><path d="M861 5 L862.5 4 L864.0 6 L865.5 4 L867.0 6 L868.5 4 L870.0 6 L871.5 4 L873.0 6 L874.5 4 L876.0 6 L877.5 4 L879.0 6 L880.5 4 L882.0 6 L883.5 4 L885.0 6 L886.5 4 L888.0 6 L889.5 4 L891.0 6 L892.5 4 L894.0 6 L895.5 4 L897.0 6 L898.5 4 L900.0 6 L901.5 4 L903.0 6 L904.5 4 L906.0 6 L907.5 4 L909.0 6 L910.5 4 L912.0 6 L913.5 4 L915.0 6 L916.5 4 L918.0 6 L919.5 4 L921.0 6 L922.5 4 L924.0 6 L925.5 4 L927.0 6 L928.5 4 L930.0 6 L931.5 4 L933.0 6 L934.5 4 L936.0 6 L937.5 4 L939.0 6 L940.5 4 L942.0 6 L943.5 4 L945.0 6 L946.5 4 L948.0 6 L949.5 4 L951.0 6 L952.5 4 L954.0 6 L955.5 4 L957.0 6 L958.5 4 L960.0 6 L961.5 4 L963.0 6 L964.5 4 L966.0 6 L967.5 4 L969.0 6 L970.5 4 L972.0 6 L973.5 4 L975.0 6 L976.5 4 L978.0 6 L979.5 4 L981.0 6 L982.5 4 L984.0 6" fill="none" stroke="#c8a0bc" stroke-width="1"/></svg>
<div style="left:329px;top:621px;width:32px;height:32px;border:1px solid #8e897e;background:#f6f4ee"><svg style="left:-1px;top:-1px" width="32" height="32"><text x="2.5" y="13" font-family="Liberation Mono" font-size="9.5" fill="#7a766c">Morph</text><rect x="3" y="18.5" width="26" height="3.5" fill="url(#mg)" stroke="#8e897e" stroke-width="0.8"/></svg></div>
<div class="t" style="left:321px;top:660px;color:#a19e92;letter-spacing:-0.15px">Gray Morphology 1</div>
<div style="left:452px;top:621px;width:32px;height:32px;border:1px solid #8e897e;background:#f6f4ee"><svg style="left:-1px;top:-1px" width="32" height="32"><text x="2.5" y="13" font-family="Liberation Mono" font-size="9.5" fill="#7a766c">Morph</text><rect x="3" y="18.5" width="26" height="3.5" fill="url(#mg)" stroke="#8e897e" stroke-width="0.8"/></svg></div>
<div class="t" style="left:444px;top:660px;color:#a19e92;letter-spacing:-0.15px">Gray Morphology 2</div>
<div style="left:575px;top:621px;width:32px;height:32px;border:1px solid #8e897e;background:#f6f4ee"><svg style="left:-1px;top:-1px" width="32" height="32"><path d="M10 9 Q14 8 15 13 Q16 20 11 20 Q6 20 6 15 Q6 10 10 9 Z" fill="#dcefe0" stroke="#d88080" stroke-width="1.6"/><path d="M19.5 8 V17 M18 8 H21" stroke="#8e897e" stroke-width="1.2"/><path d="M17.5 16 H21.5 V20 Q19.5 22 17.5 20 Z" fill="none" stroke="#8e897e" stroke-width="1"/></svg></div>
<div class="t" style="left:567px;top:660px;color:#a19e92;letter-spacing:-0.15px">Adv. Morphology 12</div>
<div style="left:698px;top:621px;width:32px;height:32px;border:1px solid #8e897e;background:#f6f4ee"><svg style="left:-1px;top:-1px" width="32" height="32"><text x="2.5" y="13" font-family="Liberation Mono" font-size="9.5" fill="#7a766c">Morph</text><rect x="3" y="18.5" width="26" height="3.5" fill="url(#mg)" stroke="#8e897e" stroke-width="0.8"/></svg></div>
<div class="t" style="left:690px;top:660px;color:#a19e92;letter-spacing:-0.15px">Gray Morphology 3</div>
<div style="left:821px;top:621px;width:32px;height:32px;border:1px solid #8e897e;background:#f6f4ee"><svg style="left:-1px;top:-1px" width="32" height="32"><path d="M10 9 Q14 8 15 13 Q16 20 11 20 Q6 20 6 15 Q6 10 10 9 Z" fill="#dcefe0" stroke="#d88080" stroke-width="1.6"/><path d="M19.5 8 V17 M18 8 H21" stroke="#8e897e" stroke-width="1.2"/><path d="M17.5 16 H21.5 V20 Q19.5 22 17.5 20 Z" fill="none" stroke="#8e897e" stroke-width="1"/></svg></div>
<div class="t" style="left:813px;top:660px;color:#a19e92;letter-spacing:-0.15px">Adv. Morphology 14</div>
<div style="left:944px;top:621px;width:32px;height:32px;border:1px solid #8e897e;background:#f6f4ee"><svg style="left:-1px;top:-1px" width="32" height="32"><path d="M10 9 Q14 8 15 13 Q16 20 11 20 Q6 20 6 15 Q6 10 10 9 Z" fill="#dcefe0" stroke="#d88080" stroke-width="1.6"/><path d="M19.5 8 V17 M18 8 H21" stroke="#8e897e" stroke-width="1.2"/><path d="M17.5 16 H21.5 V20 Q19.5 22 17.5 20 Z" fill="none" stroke="#8e897e" stroke-width="1"/></svg></div>
<div class="t" style="left:936px;top:660px;color:#a19e92;letter-spacing:-0.15px">Adv. Morphology 13</div>
<div style="left:1067px;top:621px;width:32px;height:32px;border:1px solid #111;background:#fff"><svg style="left:-1px;top:-1px" width="32" height="32"><g fill="#111"><rect x="2" y="11" width="7" height="8"/></g><path d="M3 13.5 H8 M3 16 H8 M5 12 V18" stroke="#fff" stroke-width="0.8"/><path d="M10 15 H12 M12 12.5 L15 15 L12 17.5 Z" stroke="#111" fill="#111"/><rect x="16.5" y="9.5" width="13" height="11" fill="#fff" stroke="#111" stroke-width="1.2"/><circle cx="21" cy="14" r="2.5" fill="#d02020"/><circle cx="25.5" cy="17.5" r="1.7" fill="#30a040"/><circle cx="26" cy="12" r="1" fill="#2040c0"/></svg></div>
<div class="t" style="left:1060px;top:660px;color:#000;letter-spacing:-0.15px">Particle Filter 1</div>
<div style="left:1190px;top:621px;width:32px;height:32px;border:1px solid #8e897e;background:#f6f4ee"><svg style="left:-1px;top:-1px" width="32" height="32"><path d="M5 8 Q11 6 12 12 Q13 20 8 20 Q3 20 3 14 Q3 9 5 8 Z" fill="#e8a098"/><path d="M13 15 H17 M15.5 13 L17.5 15 L15.5 17" stroke="#8e897e" fill="none"/><rect x="18.5" y="7.5" width="10" height="14" fill="#f4f2ec" stroke="#8e897e"/><path d="M18.5 11 H28.5 M18.5 14 H28.5 M18.5 17 H28.5 M22 7.5 V21.5 M25 7.5 V21.5" stroke="#8e897e" stroke-width="0.8"/></svg></div>
<div class="t" style="left:1182px;top:660px;color:#a19e92;letter-spacing:-0.15px">Particle Analysis 1</div>
<!-- script h-scroll -->
<div style="left:316px;top:711px;width:987px;height:15px;background:linear-gradient(#fafaf8,#f0efe8)"></div>
<div style="left:317px;top:711px;width:15px;height:14px;border:1px solid #b8c8f0;border-radius:2px;background:linear-gradient(#e0eafc,#bccdf4)"><svg style="left:3px;top:2px" width="8" height="9"><path d="M6 1 L2 4.5 L6 8" fill="none" stroke="#4d6185" stroke-width="2"/></svg></div>
<div style="left:782px;top:711px;width:447px;height:14px;border:1px solid #a8c0f4;border-radius:2px;background:linear-gradient(#c6d8fc,#b0c8f8 60%,#a4bcf4)"><svg style="left:218px;top:3px" width="10" height="8" shape-rendering="crispEdges"><path d="M1.5 1 V7 M3.5 1 V7 M5.5 1 V7 M7.5 1 V7" stroke="#eef4ff" stroke-width="1"/></svg></div>
<div style="left:1286px;top:711px;width:15px;height:14px;border:1px solid #b8c8f0;border-radius:2px;background:linear-gradient(#e0eafc,#bccdf4)"><svg style="left:4px;top:2px" width="8" height="9"><path d="M2 1 L6 4.5 L2 8" fill="none" stroke="#4d6185" stroke-width="2"/></svg></div>
<!-- watermark -->
<svg style="left:1212px;top:684px" width="150" height="54">
<g stroke="#e81010" stroke-width="2.6" fill="none" stroke-linecap="round">
<path d="M6 11 L20 9 M13 10 Q10 22 3 28 M12 19 L17 18 L15 27 M10 26 L16 25"/>
<path d="M28 12 L34 7 M30 12 L40 10 M27 17 L40 15 M29 21 L42 19 M31 26 L44 24 M34 14 L33 28 M30 29 L25 31 M40 26 L44 30"/>
<path d="M54 10 L58 7 M52 13 L66 11 M56 15 L55 24 M50 21 L62 19 M55 24 Q62 22 70 27 M50 29 L56 26 M62 25 L66 30"/>
</g>
<g stroke="#2c9a28" stroke-width="1.6" fill="none">
<path d="M84 8 V30 M81 12 H88 M81 18 L88 16 M91 9 V22 H98 V9 Z M91 15 H98 M93 22 L90 30 M96 22 V29 H100"/>
<path d="M108 7 L110 11 M114 6 V10 M120 7 L118 11 M106 12 H124 M109 15 H121 V24 H109 Z M109 19 H121 M112 24 L108 30 M118 24 V29 H124"/>
<path d="M130 8 H146 V30 M130 8 V30 M133 12 H143 M134 16 L142 22 M142 16 L134 22 M138 13 V28 M133 26 H143"/>
</g>
<text x="2.5" y="50" font-family="Liberation Sans" font-size="22.8" fill="#0a10c8" stroke="#0a10c8" stroke-width="0.7" letter-spacing="-0.2">shixinhua.com</text>
</svg>
<!-- bubble -->
<div style="left:1197px;top:10px;width:57px;height:57px;border-radius:50%;background:radial-gradient(circle at 50% 85%,#5cc4ff 0%,#3496e8 30%,#2068c0 62%,#1e5aa8 82%,#3a88d8 100%);box-shadow:0 0 1px #1a4a90"></div>
<div style="left:1207px;top:16px;width:14px;height:14px;border-radius:50%;background:radial-gradient(circle,rgba(255,255,255,0.35),rgba(255,255,255,0) 70%)"></div>
<div style="left:1215px;top:10px;width:26px;height:2px;border-radius:50%;background:rgba(200,230,255,0.6)"></div>
<div class="t" style="left:1205px;top:34px;color:#e4f4ff;font-size:11.5px;letter-spacing:-0.35px">2.67KB/s</div>
</body></html>
